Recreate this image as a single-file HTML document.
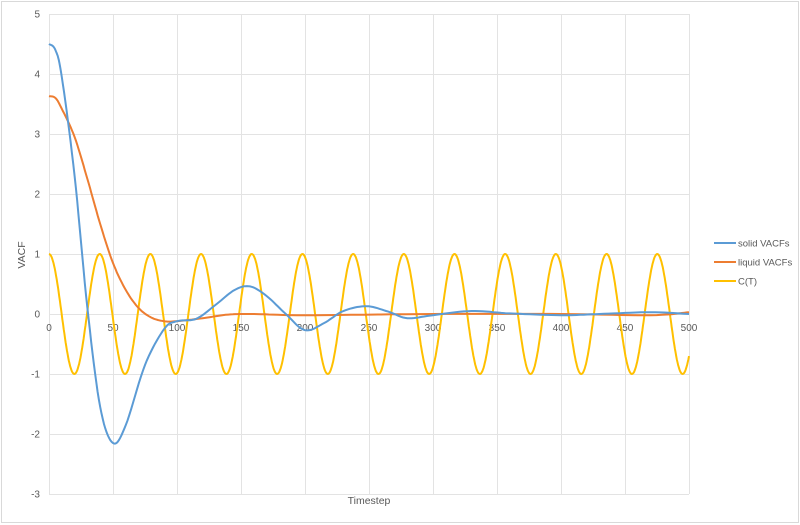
<!DOCTYPE html>
<html><head><meta charset="utf-8"><style>
html,body{margin:0;padding:0;background:#fff;}
svg{display:block;font-family:"Liberation Sans",sans-serif;}
</style></head><body>
<svg id="s" width="800" height="525" viewBox="0 0 800 525" xmlns="http://www.w3.org/2000/svg">
<rect x="1.5" y="1.5" width="797" height="521" fill="#fff" stroke="#d9d9d9"/>
<g id="grid" stroke="#e3e3e3" stroke-width="1"></g>
<g id="lbl" fill="#595959" font-size="10"></g>
<text x="0" y="0" transform="translate(25,255) rotate(-90)" text-anchor="middle" font-size="10.5" fill="#595959">VACF</text>
<text x="369" y="504" text-anchor="middle" font-size="10.5" fill="#595959">Timestep</text>
<path id="c" fill="none" stroke="#ffc000" stroke-width="2"/>
<path id="l" fill="none" stroke="#ed7d31" stroke-width="2"/>
<path id="sv" fill="none" stroke="#5b9bd5" stroke-width="2"/>
<g font-size="9.5" fill="#595959">
<line x1="714" y1="243" x2="736" y2="243" stroke="#5b9bd5" stroke-width="2"/><text x="738" y="246.5">solid VACFs</text>
<line x1="714" y1="262" x2="736" y2="262" stroke="#ed7d31" stroke-width="2"/><text x="738" y="265.5">liquid VACFs</text>
<line x1="714" y1="281" x2="736" y2="281" stroke="#ffc000" stroke-width="2"/><text x="738" y="284.5">C(T)</text>
</g>
</svg>
<script>
var X=function(t){return 49+t*1.28},Y=function(v){return 314-v*60};
var g=document.getElementById('grid'),L=document.getElementById('lbl'),ns='http://www.w3.org/2000/svg';
function el(p,n,a,txt){var e=document.createElementNS(ns,n);for(var k in a)e.setAttribute(k,a[k]);if(txt!=null)e.textContent=txt;p.appendChild(e);}
for(var v=-3;v<=5;v++){el(g,'line',{x1:49,x2:689,y1:Y(v)+.5,y2:Y(v)+.5});el(L,'text',{x:40,y:Y(v)+3.5,'text-anchor':'end'},v);}
for(var t=0;t<=500;t+=50){el(g,'line',{x1:Math.round(X(t))+.5,x2:Math.round(X(t))+.5,y1:14,y2:494});el(L,'text',{x:X(t),y:331,'text-anchor':'middle'},t);}
function cr(pts){var s='M'+X(pts[0][0])+' '+Y(pts[0][1]);for(var i=0;i<pts.length-1;i++){var p0=pts[Math.max(i-1,0)],p1=pts[i],p2=pts[i+1],p3=pts[Math.min(i+2,pts.length-1)];
for(var k=1;k<=10;k++){var u=k/10,u2=u*u,u3=u2*u;function f(a,b,c,d){return 0.5*(2*b+(-a+c)*u+(2*a-5*b+4*c-d)*u2+(-a+3*b-3*c+d)*u3);}
var tt=f(p0[0],p1[0],p2[0],p3[0]),vv=f(p0[1],p1[1],p2[1],p3[1]);s+=' L'+X(tt).toFixed(1)+' '+Y(vv).toFixed(1);}}return s;}
document.getElementById('sv').setAttribute('d',cr([[0,4.5],[5,4.4],[10,3.95],[20,2.3],[30,0.1],[40,-1.55],[50,-2.15],[60,-1.85],[75,-0.85],[90,-0.25],[100,-0.12],[115,-0.08],[130,0.15],[145,0.4],[157,0.46],[170,0.3],[185,0.0],[200,-0.27],[215,-0.15],[230,0.05],[248,0.13],[265,0.04],[280,-0.07],[300,-0.02],[330,0.05],[360,0.01],[400,-0.02],[430,0.0],[470,0.03],[500,0.0]]));
document.getElementById('l').setAttribute('d',cr([[0,3.63],[5,3.6],[10,3.42],[20,2.95],[30,2.25],[40,1.5],[50,0.85],[60,0.4],[70,0.1],[80,-0.06],[90,-0.12],[100,-0.12],[120,-0.07],[140,-0.01],[160,0.0],[200,-0.02],[300,0],[400,0],[470,-0.02],[500,0.03]]));
var s='';for(var i=0;i<=1000;i++){var t=i/2;s+=(i?' L':'M')+X(t).toFixed(1)+' '+Y(Math.cos(2*Math.PI*t/39.6)).toFixed(1);}
document.getElementById('c').setAttribute('d',s);
</script>
</body></html>
